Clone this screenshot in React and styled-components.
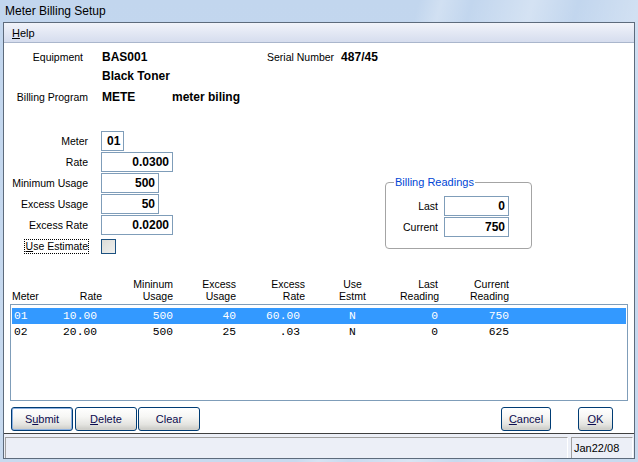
import React from 'react';
import styled, { createGlobalStyle } from 'styled-components';

const Global = createGlobalStyle`
  html, body { margin: 0; padding: 0; }
  body {
    width: 638px; height: 462px; overflow: hidden;
    font-family: "Liberation Sans", Arial, sans-serif;
    font-size: 10.5px; color: #000;
  }
  * { box-sizing: border-box; }
`;

const Window = styled.div`
  width: 638px; height: 462px;
  display: flex; flex-direction: column;
  padding: 0 3px 3px 3px;
  background:
    linear-gradient(105deg, transparent 0 55%, rgba(255,255,255,0.25) 58%, transparent 62%, rgba(255,255,255,0.3) 70%, transparent 76%, rgba(255,255,255,0.25) 84%, transparent 90%),
    linear-gradient(180deg, #c2d6ee 0%, #c8daef 100%);
`;

const TitleBar = styled.div`
  height: 22px; flex: none;
  display: flex; align-items: center;
  padding-left: 2px;
  font-size: 12px; color: #000;
`;

const Client = styled.div`
  flex: 1; display: flex; flex-direction: column;
  border: 1px solid #5d6b7c;
  background: #fff;
  min-height: 0;
`;

const MenuBar = styled.div`
  height: 20px; flex: none;
  display: flex; align-items: center;
  padding-left: 7px;
  background: linear-gradient(180deg, #f2f4fa 0%, #e3e8f4 50%, #d6ddee 100%);
  border-bottom: 1px solid #aab6cc;
`;

const MenuItem = styled.span`
  padding-left: 1px;
  font-size: 11px;
`;

const U = styled.span`text-decoration: underline;`;

const Body = styled.div`
  flex: 1; display: flex; flex-direction: column;
  padding: 0 6px;
  min-height: 0;
`;

const InfoRow = styled.div`
  display: flex; align-items: center;
  height: 19px;
  margin-top: ${p => p.$mt || 0}px;
  margin-left: -6px;
`;

const InfoLabel = styled.span`
  width: ${p => p.$auto ? 'auto' : '84px'};
  text-align: right;
  padding-right: ${p => p.$pr || 0}px;
  white-space: nowrap;
`;

const InfoValue = styled.span`
  font-weight: bold; font-size: 12px;
  width: ${p => p.$w ? p.$w + 'px' : 'auto'};
  margin-left: ${p => p.$ml || 0}px;
  white-space: nowrap;
`;

const FormArea = styled.div`
  display: flex; align-items: flex-start;
  margin-top: 25px;
  margin-left: -6px;
`;

const FieldColumn = styled.div`
  width: 169px;
  display: flex; flex-direction: column; gap: 1px;
`;

const FieldRow = styled.div`
  display: flex; align-items: center; height: 20px;
`;

const FieldLabel = styled.span`
  width: ${p => p.$w || 84}px; text-align: right; white-space: nowrap;
`;

const FocusLabel = styled.span`
  border: 1px dotted #000;
  padding: 0 0 0 1px;
  line-height: 13px;
`;

const FieldBox = styled.div`
  width: ${p => p.$w}px; height: 20px;
  margin-left: ${p => p.$ml || 13}px;
  border: 1px solid #7f9db9;
  background: #fff;
  display: flex; align-items: center;
  justify-content: ${p => p.$left ? 'flex-start' : 'flex-end'};
  padding: ${p => p.$left ? '0 0 0 5px' : '0 3px 0 0'};
  font-weight: bold; font-size: 12px;
`;

const CheckBox = styled.div`
  width: 15px; height: 15px; margin-left: 12px;
  border: 1px solid #1c5180;
  background: linear-gradient(135deg, #dcdcd7 0%, #f0f0ee 100%);
`;

const CheckLabelWrap = styled.div`
  width: 85px; display: flex; justify-content: flex-end;
`;

const Group = styled.fieldset`
  margin: 45px 0 0 212px;
  width: 147px;
  border: 1px solid #a4a4a4;
  border-radius: 4px;
  padding: 7px 0 11px 0;
  display: flex; flex-direction: column; gap: 1px;
`;

const Legend = styled.legend`
  color: #0046d5;
  padding: 0 1px;
  margin-left: 8px;
  line-height: 13px;
  font-size: 11px;
`;

const GroupRow = styled.div`
  display: flex; align-items: center; height: 20px;
`;

const columns = '48px 42px 71px 63px 69px 95px 38px 71px';

const ListHeader = styled.div`
  display: grid;
  grid-template-columns: ${columns};
  margin: 22px 0 0 2px;
  line-height: 12px;
  height: 24px;
  align-items: end;
`;

const HeadCell = styled.div`
  text-align: ${p => p.$align || 'right'};
  white-space: nowrap;
`;

const ListBox = styled.div`
  height: 97px; margin-top: 2px;
  border: 1px solid #7f9db9;
  padding: 3px 1px 1px 1px;
  display: flex; flex-direction: column;
`;

const ListRow = styled.div`
  display: grid;
  grid-template-columns: ${columns};
  height: 16px; align-items: center;
  font-family: "Liberation Mono", "Courier New", monospace;
  font-size: 11.3px;
  background: ${p => p.$sel ? '#3399ff' : 'transparent'};
  color: ${p => p.$sel ? '#fff' : '#000'};
`;

const Cell = styled.div`
  text-align: ${p => p.$align || 'right'};
  padding-left: ${p => p.$pl || 0}px;
  padding-right: ${p => p.$pr || 0}px;
  white-space: pre;
`;

const ButtonBar = styled.div`
  display: flex; align-items: center;
  margin: 6px 15px 0 1px;
`;

const Button = styled.button`
  width: ${p => p.$w}px; height: 24px;
  margin-left: ${p => p.$ml || 0}px;
  border: 1px solid #003c74;
  border-radius: 3px;
  background: linear-gradient(180deg, #ffffff 0%, #f6f6f4 40%, #e4e4e0 75%, #c9c9c4 100%);
  box-shadow: ${p => p.$default ? 'inset 0 0 0 1px #8cb0e0' : 'inset 0 -1px 0 #d0d0cc'};
  font-family: "Liberation Sans", Arial, sans-serif;
  font-size: 11px; color: #0b0b4f;
  padding: 0;
  cursor: default;
`;

const Spacer = styled.div`flex: 1;`;

const StatusBar = styled.div`
  height: 25px; flex: none;
  border-top: 1px solid #3f3f3f;
  background: #eceff7;
  display: flex;
  padding: 3px 1px 0 1px;
  gap: 3px;
`;

const StatusPane = styled.div`
  flex: ${p => p.$w ? 'none' : 1};
  width: ${p => p.$w ? p.$w + 'px' : 'auto'};
  border-top: 1px solid #a0a0a0;
  border-left: 1px solid #a0a0a0;
  border-right: 1px solid #ffffff;
  display: flex; align-items: center;
  padding-left: 2px;
  font-size: 11px;
`;

const rows = [
  { m: '01', r: '10.00', mu: '500', eu: '40', er: '60.00', ue: 'N', lr: '0', cr: '750', sel: true },
  { m: '02', r: '20.00', mu: '500', eu: '25', er: '.03', ue: 'N', lr: '0', cr: '625' },
];

export default function App() {
  return (
    <>
      <Global />
      <Window>
        <TitleBar>Meter Billing Setup</TitleBar>
        <Client>
          <MenuBar><MenuItem><U>H</U>elp</MenuItem></MenuBar>
          <Body>
            <InfoRow $mt={4}>
              <InfoLabel $pr={5}>Equipment</InfoLabel>
              <InfoValue $ml={14} $w={165}>BAS001</InfoValue>
              <InfoLabel $auto>Serial Number</InfoLabel>
              <InfoValue $ml={7}>487/45</InfoValue>
            </InfoRow>
            <InfoRow>
              <InfoLabel />
              <InfoValue $ml={14}>Black Toner</InfoValue>
            </InfoRow>
            <InfoRow $mt={2}>
              <InfoLabel>Billing Program</InfoLabel>
              <InfoValue $ml={14} $w={70}>METE</InfoValue>
              <InfoValue>meter biling</InfoValue>
            </InfoRow>

            <FormArea>
              <FieldColumn>
                <FieldRow><FieldLabel>Meter</FieldLabel><FieldBox $w={23} $left>01</FieldBox></FieldRow>
                <FieldRow><FieldLabel>Rate</FieldLabel><FieldBox $w={72}>0.0300</FieldBox></FieldRow>
                <FieldRow><FieldLabel>Minimum Usage</FieldLabel><FieldBox $w={58}>500</FieldBox></FieldRow>
                <FieldRow><FieldLabel>Excess Usage</FieldLabel><FieldBox $w={58}>50</FieldBox></FieldRow>
                <FieldRow><FieldLabel>Excess Rate</FieldLabel><FieldBox $w={72}>0.0200</FieldBox></FieldRow>
                <FieldRow>
                  <CheckLabelWrap><FocusLabel><U>U</U>se Estimate</FocusLabel></CheckLabelWrap>
                  <CheckBox />
                </FieldRow>
              </FieldColumn>
              <Group>
                <Legend>Billing Readings</Legend>
                <GroupRow><FieldLabel $w={52}>Last</FieldLabel><FieldBox $w={65} $ml={6}>0</FieldBox></GroupRow>
                <GroupRow><FieldLabel $w={52}>Current</FieldLabel><FieldBox $w={65} $ml={6}>750</FieldBox></GroupRow>
              </Group>
            </FormArea>

            <ListHeader>
              <HeadCell $align="left">Meter</HeadCell>
              <HeadCell>Rate</HeadCell>
              <HeadCell>Mininum<br />Usage</HeadCell>
              <HeadCell>Excess<br />Usage</HeadCell>
              <HeadCell>Excess<br />Rate</HeadCell>
              <HeadCell $align="center">Use<br />Estmt</HeadCell>
              <HeadCell>Last<br />Reading</HeadCell>
              <HeadCell>Current<br />Reading</HeadCell>
            </ListHeader>
            <ListBox>
              {rows.map(r => (
                <ListRow key={r.m} $sel={r.sel}>
                  <Cell $align="left" $pl={2}>{r.m}</Cell>
                  <Cell $pr={5}>{r.r}</Cell>
                  <Cell>{r.mu}</Cell>
                  <Cell>{r.eu}</Cell>
                  <Cell $pr={5}>{r.er}</Cell>
                  <Cell $align="center">{r.ue}</Cell>
                  <Cell>{r.lr}</Cell>
                  <Cell>{r.cr}</Cell>
                </ListRow>
              ))}
            </ListBox>

            <ButtonBar>
              <Button $w={62} $default>S<U>u</U>bmit</Button>
              <Button $w={62} $ml={2}><U>D</U>elete</Button>
              <Button $w={62} $ml={1}>Clear</Button>
              <Spacer />
              <Button $w={50}><U>C</U>ancel</Button>
              <Button $w={35} $ml={27}><U>O</U>K</Button>
            </ButtonBar>
          </Body>
          <StatusBar>
            <StatusPane />
            <StatusPane $w={62}>Jan22/08</StatusPane>
          </StatusBar>
        </Client>
      </Window>
    </>
  );
}
